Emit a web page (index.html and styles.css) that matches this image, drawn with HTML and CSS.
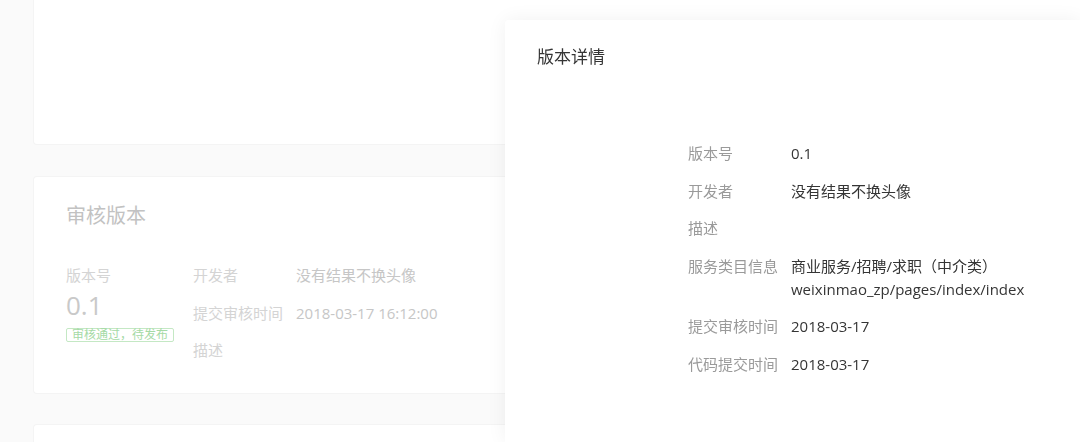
FILE: index.html
```html
<!doctype html>
<html lang="zh-CN">
  <head>
    <meta charset="UTF-8" />
    <meta name="viewport" content="width=device-width, initial-scale=1.0" />
    <title>版本详情</title>
    <link rel="stylesheet" href="styles.css">
  </head>
  <body>
    <div class="page">
      <div class="card card-top"></div>

      <div class="card card-audit">
        <h2 class="card-title">审核版本</h2>
        <div class="audit-body">
          <div class="version-col">
            <div class="version-label">版本号</div>
            <div class="version-num">0.1</div>
            <span class="badge">审核通过，待发布</span>
          </div>
          <div class="audit-info">
            <div class="info-row">
              <span class="info-label">开发者</span>
              <span class="info-value">没有结果不换头像</span>
            </div>
            <div class="info-row">
              <span class="info-label">提交审核时间</span>
              <span class="info-value">2018-03-17 16:12:00</span>
            </div>
            <div class="info-row">
              <span class="info-label">描述</span>
              <span class="info-value"></span>
            </div>
          </div>
        </div>
      </div>

      <div class="card card-bottom"></div>
    </div>

    <div class="drawer">
      <h1 class="drawer-title">版本详情</h1>
      <div class="detail-list">
        <div class="detail-row">
          <span class="detail-label">版本号</span>
          <span class="detail-value">0.1</span>
        </div>
        <div class="detail-row">
          <span class="detail-label">开发者</span>
          <span class="detail-value">没有结果不换头像</span>
        </div>
        <div class="detail-row">
          <span class="detail-label">描述</span>
          <span class="detail-value"></span>
        </div>
        <div class="detail-row">
          <span class="detail-label">服务类目信息</span>
          <span class="detail-value">商业服务/招聘/求职（中介类）<br />weixinmao_zp/pages/index/index</span>
        </div>
        <div class="detail-row">
          <span class="detail-label">提交审核时间</span>
          <span class="detail-value">2018-03-17</span>
        </div>
        <div class="detail-row">
          <span class="detail-label">代码提交时间</span>
          <span class="detail-value">2018-03-17</span>
        </div>
      </div>
    </div>
  </body>
</html>
```

FILE: styles.css
```css
:root {
  --page-background: #fafafa;
  --card-background: #ffffff;
  --card-border: #f4f4f4;
  --text-color: #353535;
  --label-color: #9a9a9a;
  --faded-title: #c2c2c2;
  --faded-label: #d4d4d4;
  --faded-value: #c6c6c6;
}

html,
body {
  height: 100%;
}

body {
  font-family: "Open Sans", "Noto Sans CJK SC", sans-serif;
  margin: 0;
  padding: 0;
  background-color: var(--page-background);
  color: var(--text-color);
  overflow: hidden;
}

.page {
  padding: 0 0 0 33px;
}

.card {
  background-color: var(--card-background);
  border: 1px solid var(--card-border);
  border-right: none;
  border-radius: 4px 0 0 4px;
  box-sizing: border-box;
}

.card-top {
  height: 145px;
  border-top: none;
  border-radius: 0 0 0 4px;
}

.card-audit {
  margin-top: 31px;
  height: 218px;
  padding: 24px 32px 0;
}

.card-bottom {
  margin-top: 30px;
  height: 19px;
  border-bottom: none;
  border-radius: 4px 0 0 0;
}

.card-title {
  margin: 0;
  font-size: 20px;
  font-weight: normal;
  line-height: 30px;
  color: var(--faded-title);
}

.audit-body {
  display: flex;
  margin-top: 33px;
}

.version-col {
  width: 127px;
  display: flex;
  flex-direction: column;
  align-items: flex-start;
}

.version-label {
  font-size: 15px;
  line-height: 23px;
  color: var(--faded-label);
}

.version-num {
  font-size: 26px;
  line-height: 30px;
  margin-top: 3px;
  color: #c9c9c9;
}

.badge {
  margin-top: 8px;
  padding: 0 5px;
  font-size: 12px;
  line-height: 12px;
  color: #a5daa5;
  border: 1px solid #c4e8c4;
  border-radius: 2px;
}

.audit-info {
  display: flex;
  flex-direction: column;
  gap: 14.5px;
}

.info-row {
  display: flex;
  font-size: 15px;
  line-height: 23px;
}

.info-label {
  width: 103px;
  flex-shrink: 0;
  color: var(--faded-label);
}

.info-value {
  color: var(--faded-value);
}

/* detail drawer over the list */
.drawer {
  position: fixed;
  top: 20px;
  left: 505px;
  right: 0;
  bottom: 0;
  background-color: var(--card-background);
  border-radius: 4px 0 0 0;
  box-shadow: 0 0 20px rgba(0, 0, 0, 0.06);
  padding: 25px 32px;
}

.drawer-title {
  margin: 0;
  font-size: 17px;
  font-weight: normal;
  line-height: 24px;
  color: var(--text-color);
}

.detail-list {
  display: flex;
  flex-direction: column;
  gap: 14.6px;
  margin: 73px 0 0 151px;
}

.detail-row {
  display: flex;
  font-size: 15px;
  line-height: 23px;
}

.detail-label {
  width: 103px;
  flex-shrink: 0;
  color: var(--label-color);
}

.detail-value {
  color: var(--text-color);
}
```
